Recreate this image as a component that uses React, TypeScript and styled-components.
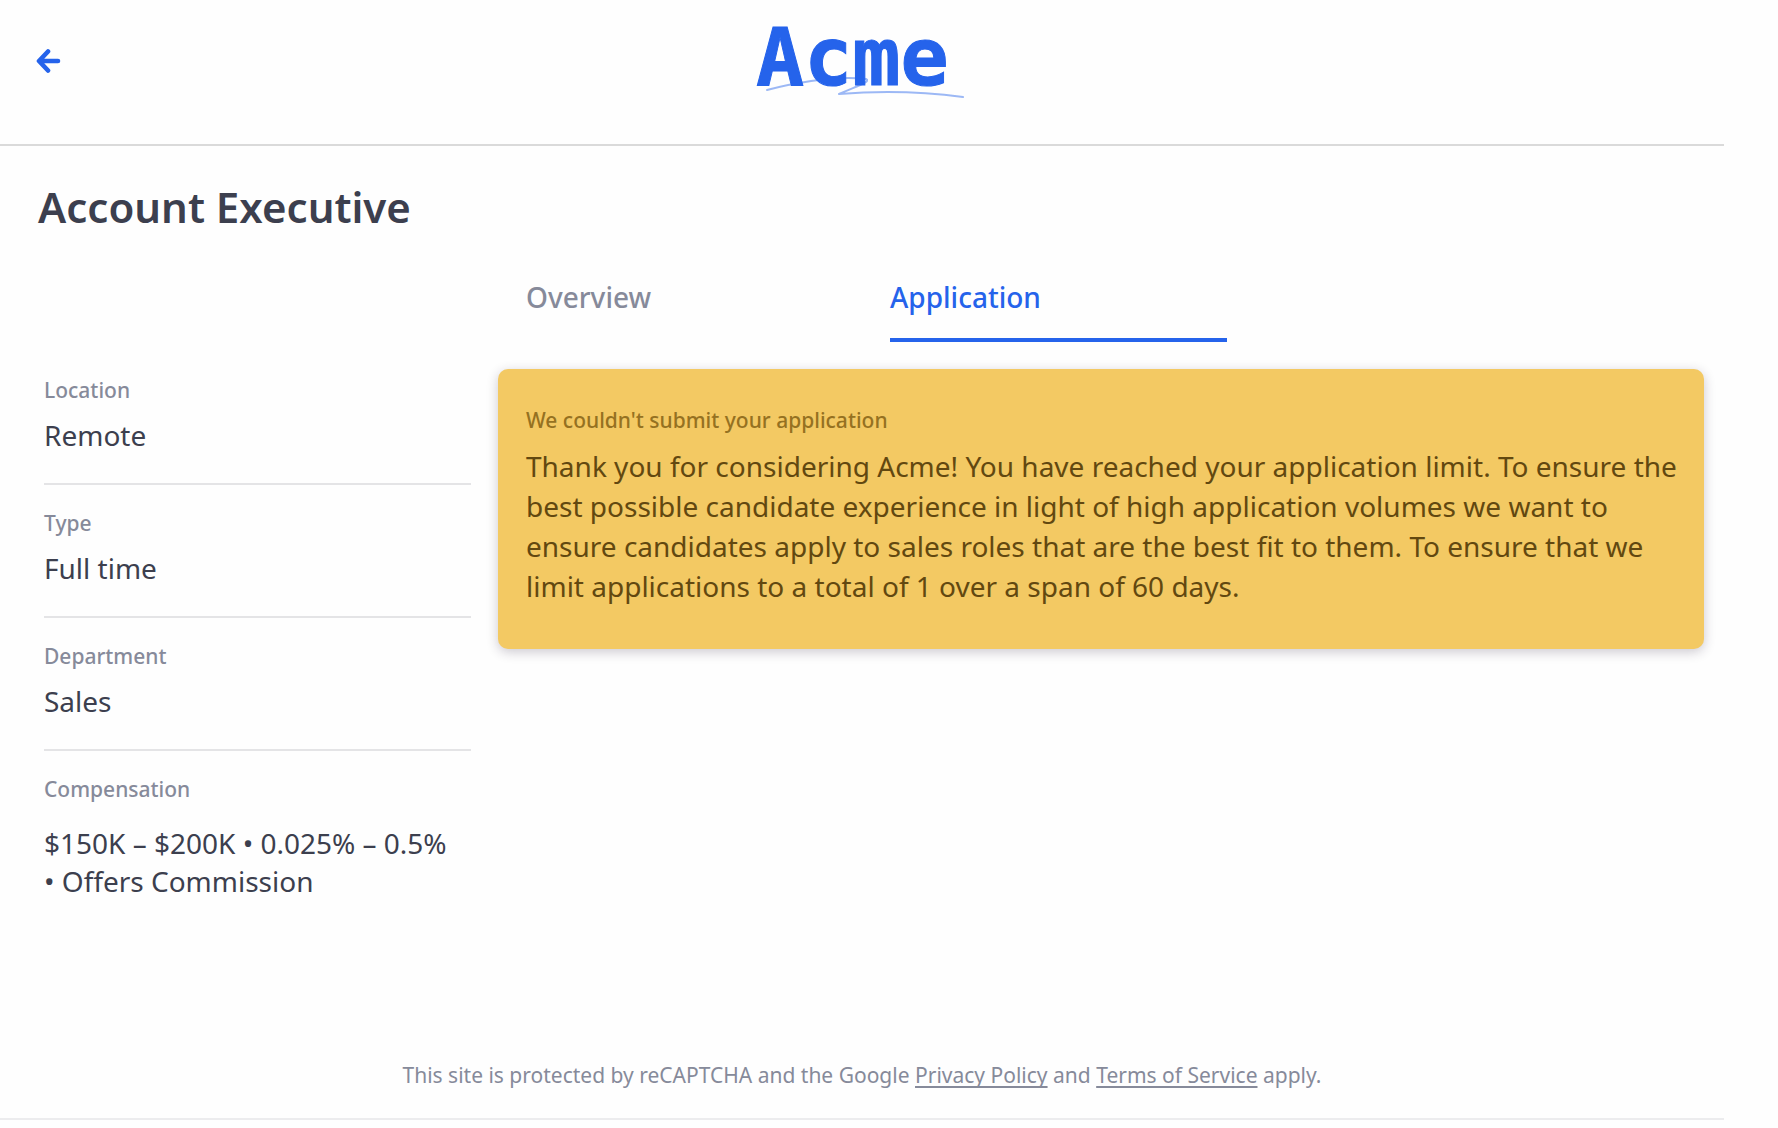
import React, { useState } from "react";
import styled, { createGlobalStyle } from "styled-components";

const blue = "#2563eb";
const ink = "#3c3f4e";
const muted = "#868a9a";
const rule = "#e4e4e6";

const GlobalStyle = createGlobalStyle`
  *, *::before, *::after { box-sizing: border-box; }
  body {
    margin: 0;
    background: #fefefe;
    color: ${ink};
    font-family: "Noto Sans", "Open Sans", sans-serif;
    font-size: 28px;
    line-height: 38px;
  }
`;

const Page = styled.div`
  display: flex;
  flex-direction: column;
  min-height: 100vh;
  padding: 0 54px 8px 0;
`;

const Header = styled.header`
  display: grid;
  grid-template-columns: 1fr auto 1fr;
  align-items: start;
  padding: 20px 36px 28px;
  border-bottom: 2px solid #dadada;
`;

const BackButton = styled.button`
  display: flex;
  justify-self: start;
  margin-top: 28px;
  padding: 0;
  border: 0;
  background: none;
  color: ${blue};
  cursor: pointer;
`;

const LogoDrawing = styled.svg`
  display: block;
  color: ${blue};
  overflow: visible;

  text {
    font: 700 80px "DejaVu Sans Mono", monospace;
    fill: currentColor;
    stroke: currentColor;
    stroke-width: 1px;
  }
`;

const Main = styled.main`
  padding: 33px 20px 40px 38px;
`;

const Title = styled.h1`
  margin: 0 0 42px;
  font-size: 42px;
  font-weight: 600;
  line-height: 56px;
`;

const Columns = styled.div`
  display: grid;
  grid-template-columns: minmax(0, 433px) minmax(0, 1fr);
  column-gap: 27px;
  align-items: start;
`;

const Details = styled.dl`
  margin: 0;
  padding: 75px 0 0 6px;
`;

const Detail = styled.div`
  padding: 23px 0 29px;

  &:not(:last-child) {
    border-bottom: 2px solid ${rule};
  }
`;

const Label = styled.dt`
  color: ${muted};
  font-size: 21px;
  font-weight: 500;
  line-height: 30px;
`;

const Value = styled.dd<{ $spaced?: boolean }>`
  margin: ${(p) => (p.$spaced ? 20 : 11)}px 0 0;
`;

const Tabs = styled.div`
  display: flex;
  gap: 27px;
  padding: 0 28px;
  margin-bottom: 27px;
`;

const Tab = styled.button<{ $active: boolean }>`
  flex: 0 1 337px;
  padding: 0 0 21px;
  border: 0;
  border-bottom: 4px solid ${(p) => (p.$active ? blue : "transparent")};
  background: none;
  color: ${(p) => (p.$active ? blue : muted)};
  font: inherit;
  font-weight: 500;
  line-height: 40px;
  text-align: left;
  cursor: pointer;
`;

const Alert = styled.section`
  padding: 36px 24px 43px 28px;
  border-radius: 10px;
  background: #f3c963;
  box-shadow: 0 3px 12px rgba(40, 30, 60, 0.24);
`;

const AlertTitle = styled.h2`
  margin: 0 0 11px;
  color: #957121;
  font-size: 21px;
  font-weight: 500;
  line-height: 30px;
`;

const AlertText = styled.p`
  margin: 0;
  color: #624810;
  line-height: 40px;
`;

const Footer = styled.footer`
  margin-top: auto;
  padding-bottom: 28px;
  border-bottom: 2px solid #ececee;
  color: ${muted};
  font-size: 21px;
  line-height: 30px;
  text-align: center;
`;

const FooterLink = styled.a`
  color: inherit;
  text-decoration: underline;
  text-decoration-skip-ink: none;
  text-decoration-thickness: 2px;
  text-underline-offset: 3px;
`;

function Logo() {
  return (
    <LogoDrawing width="216" height="96" viewBox="0 0 216 96" role="img" aria-label="Acme">
      <path
        d="M13 70 C45 62 84 56 112 59 C118 62 100 67 85 74 C120 71 165 71 209 77"
        fill="none"
        stroke="currentColor"
        strokeOpacity="0.45"
        strokeWidth="2"
        strokeLinecap="round"
        strokeLinejoin="round"
      />
      <text x="2" y="65">Acme</text>
    </LogoDrawing>
  );
}

const details = [
  { label: "Location", value: "Remote" },
  { label: "Type", value: "Full time" },
  { label: "Department", value: "Sales" },
  { label: "Compensation", value: "$150K – $200K • 0.025% – 0.5% •\u00a0Offers Commission", spaced: true },
];

const tabs = ["Overview", "Application"];

export default function App() {
  const [active, setActive] = useState("Application");

  return (
    <>
      <GlobalStyle />
      <Page>
        <Header>
          <BackButton type="button" aria-label="Back">
            <svg width="26" height="26" viewBox="0 0 26 26" aria-hidden="true">
              <path
                d="M22 13H4M12 3.5 3 13l9 9.5"
                fill="none"
                stroke="currentColor"
                strokeWidth="4.6"
                strokeLinecap="round"
                strokeLinejoin="round"
              />
            </svg>
          </BackButton>
          <Logo />
        </Header>
        <Main>
          <Title>Account Executive</Title>
          <Columns>
            <Details>
              {details.map((d) => (
                <Detail key={d.label}>
                  <Label>{d.label}</Label>
                  <Value $spaced={d.spaced}>{d.value}</Value>
                </Detail>
              ))}
            </Details>
            <div>
              <Tabs role="tablist">
                {tabs.map((name) => (
                  <Tab
                    key={name}
                    type="button"
                    role="tab"
                    aria-selected={name === active}
                    $active={name === active}
                    onClick={() => setActive(name)}
                  >
                    {name}
                  </Tab>
                ))}
              </Tabs>
              <Alert role="alert">
                <AlertTitle>We couldn't submit your application</AlertTitle>
                <AlertText>
                  Thank you for considering Acme! You have reached your application limit. To ensure the
                  best possible candidate experience in light of high application volumes we want to
                  ensure candidates apply to sales roles that are the best fit to them. To ensure that we
                  limit applications to a total of 1 over a span of 60 days.
                </AlertText>
              </Alert>
            </div>
          </Columns>
        </Main>
        <Footer>
          This site is protected by reCAPTCHA and the Google{" "}
          <FooterLink href="#privacy">Privacy Policy</FooterLink> and{" "}
          <FooterLink href="#terms">Terms of Service</FooterLink> apply.
        </Footer>
      </Page>
    </>
  );
}
